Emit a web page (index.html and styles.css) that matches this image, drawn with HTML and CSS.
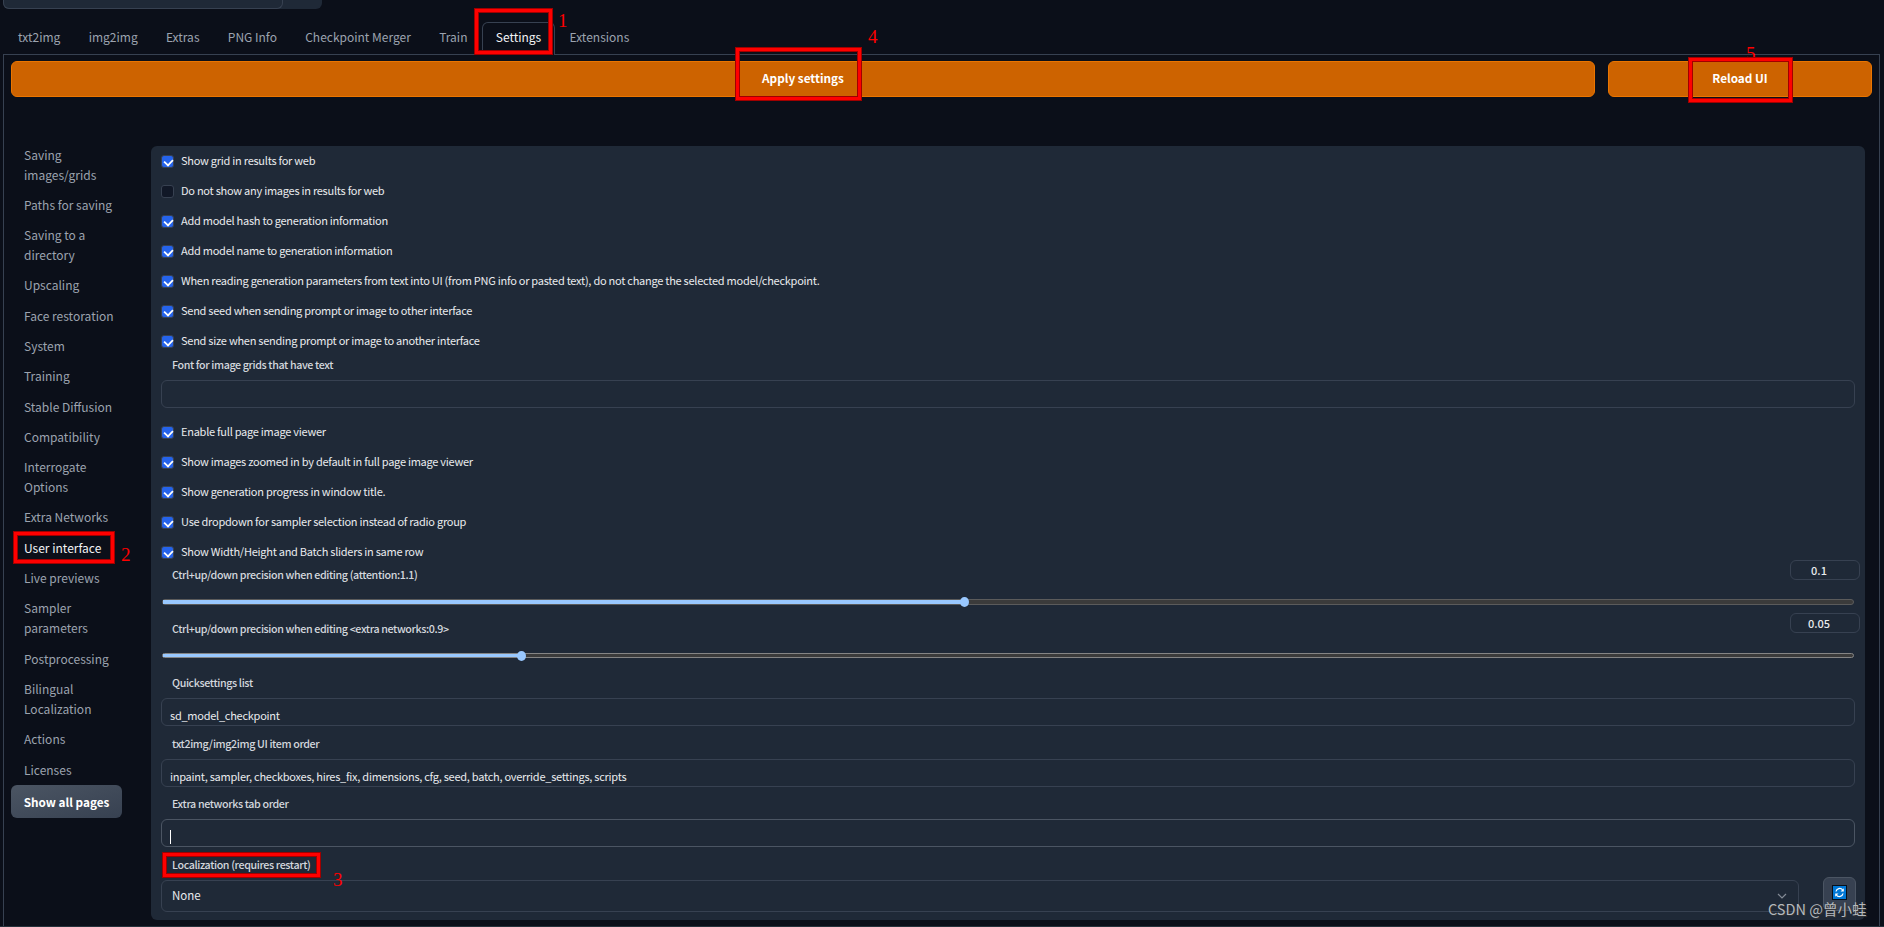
FILE: index.html
```html
<!DOCTYPE html>
<html lang="en">
<head>
    <meta charset="UTF-8">
    <meta name="viewport" content="width=device-width, initial-scale=1.0">
    <title>Stable Diffusion</title>
    <link rel="stylesheet" href="styles.css">
</head>
<body>
    <div class="quicksettings"><div class="quick-select"></div></div>

    <nav class="tabs">
        <span class="tab">txt2img</span>
        <span class="tab">img2img</span>
        <span class="tab">Extras</span>
        <span class="tab">PNG Info</span>
        <span class="tab">Checkpoint Merger</span>
        <span class="tab">Train</span>
        <span class="tab active">Settings</span>
        <span class="tab">Extensions</span>
    </nav>

    <main class="tab-content">
        <div class="actions">
            <button class="primary apply">Apply settings</button>
            <button class="primary reload">Reload UI</button>
        </div>

        <div class="settings">
            <aside class="sidebar">
                <span class="page">Saving images/grids</span>
                <span class="page">Paths for saving</span>
                <span class="page">Saving to a directory</span>
                <span class="page">Upscaling</span>
                <span class="page">Face restoration</span>
                <span class="page">System</span>
                <span class="page">Training</span>
                <span class="page">Stable Diffusion</span>
                <span class="page">Compatibility</span>
                <span class="page">Interrogate Options</span>
                <span class="page">Extra Networks</span>
                <span class="page selected">User interface</span>
                <span class="page">Live previews</span>
                <span class="page">Sampler parameters</span>
                <span class="page">Postprocessing</span>
                <span class="page">Bilingual Localization</span>
                <span class="page">Actions</span>
                <span class="page">Licenses</span>
                <button class="show-all">Show all pages</button>
            </aside>

            <section class="panel">
                <label class="check"><i class="box on"></i>Show grid in results for web</label>
                <label class="check"><i class="box"></i>Do not show any images in results for web</label>
                <label class="check"><i class="box on"></i>Add model hash to generation information</label>
                <label class="check"><i class="box on"></i>Add model name to generation information</label>
                <label class="check"><i class="box on"></i>When reading generation parameters from text into UI (from PNG info or pasted text), do not change the selected model/checkpoint.</label>
                <label class="check"><i class="box on"></i>Send seed when sending prompt or image to other interface</label>
                <label class="check"><i class="box on"></i>Send size when sending prompt or image to another interface</label>

                <div class="field font-field">
                    <div class="label">Font for image grids that have text</div>
                    <div class="input"></div>
                </div>

                <label class="check"><i class="box on"></i>Enable full page image viewer</label>
                <label class="check"><i class="box on"></i>Show images zoomed in by default in full page image viewer</label>
                <label class="check"><i class="box on"></i>Show generation progress in window title.</label>
                <label class="check"><i class="box on"></i>Use dropdown for sampler selection instead of radio group</label>
                <label class="check"><i class="box on"></i>Show Width/Height and Batch sliders in same row</label>

                <div class="slider-field first">
                    <div class="slider-head">
                        <div class="label">Ctrl+up/down precision when editing (attention:1.1)</div>
                        <div class="number">0.1</div>
                    </div>
                    <div class="track"><div class="fill" style="width: 47.4%"></div></div>
                </div>
                <div class="slider-field second">
                    <div class="slider-head">
                        <div class="label">Ctrl+up/down precision when editing &lt;extra networks:0.9&gt;</div>
                        <div class="number">0.05</div>
                    </div>
                    <div class="track thin"><div class="fill" style="width: 21.2%"></div></div>
                </div>

                <div class="field">
                    <div class="label">Quicksettings list</div>
                    <div class="input">sd_model_checkpoint</div>
                </div>
                <div class="field">
                    <div class="label">txt2img/img2img UI item order</div>
                    <div class="input">inpaint, sampler, checkboxes, hires_fix, dimensions, cfg, seed, batch, override_settings, scripts</div>
                </div>
                <div class="field">
                    <div class="label">Extra networks tab order</div>
                    <div class="input focused"><span class="caret"></span></div>
                </div>
                <div class="field">
                    <div class="label">Localization (requires restart)</div>
                    <div class="select-row">
                        <div class="select">
                            None
                            <svg width="10" height="6" viewBox="0 0 10 6"><path d="M1 1l4 4 4-4" fill="none" stroke="#848b96" stroke-width="1.2"/></svg>
                        </div>
                        <button class="refresh">
                            <svg width="15" height="15" viewBox="0 0 15 15">
                                <rect x=".5" y=".5" width="14" height="14" fill="#0078d7" stroke="#06101c"/>
                                <path d="M4 6.5a3.7 3.7 0 0 1 6.6-1.6M11 8.5a3.7 3.7 0 0 1-6.6 1.6" fill="none" stroke="#fff" stroke-width="1.3"/>
                                <path d="M11.8 3.2v3.3H8.5zM3.2 11.8V8.5h3.3z" fill="#fff"/>
                            </svg>
                        </button>
                    </div>
                </div>
            </section>
        </div>
    </main>
    <div class="bottom-edge"></div>

    <!-- step markers -->
    <div class="mark mark1"></div><span class="step step1">1</span>
    <div class="mark mark2"></div><span class="step step2">2</span>
    <div class="mark mark3"></div><span class="step step3">3</span>
    <span class="step step5">5</span><div class="mark mark5"></div>
    <div class="mark mark4"></div><span class="step step4">4</span>
    <div class="watermark">CSDN @曾小蛙</div>
</body>
</html>
```
FILE: styles.css
```css
* {
    box-sizing: border-box;
}
body {
    margin: 0;
    height: 927px;
    overflow: hidden;
    position: relative;
    background: #0b0f19;
    color: #e9ebee;
    font-family: "Noto Sans CJK SC", sans-serif;
    font-size: 12px;
    line-height: 17px;
    display: flex;
    flex-direction: column;
}
button {
    font-family: inherit;
    padding: 0;
}
.quicksettings {
    width: 319px;
    height: 9px;
    margin-left: 3px;
    background: #1f2937;
    border-radius: 0 0 6px 6px;
}
.quick-select {
    width: 280px;
    height: 9px;
    border: 1px solid #374151;
    border-top: 0;
    border-radius: 0 0 6px 6px;
}
.tabs {
    display: flex;
    height: 46px;
    padding: 13px 0 0 4px;
}
.tab {
    height: 33px;
    padding: 0 13px;
    border: 1px solid transparent;
    border-bottom: 0;
    border-radius: 6px 6px 0 0;
    color: #9ca3af;
    font-size: 12px;
    line-height: 28px;
    white-space: nowrap;
}
.tab + .tab {
    margin-left: 0.3px;
}
.tab.active {
    position: relative;
    background: #0b0f19;
    border-color: #374151;
    color: #f3f4f6;
}
.tab-content {
    margin: -1px 4px 0 3px;
    height: 872px;
    border: 1px solid #374151;
    border-bottom: 0;
    padding: 6px 7px 0 7px;
}
.actions {
    display: flex;
    gap: 13px;
    height: 36px;
}
.primary {
    padding-bottom: 3px;
    border: 1px solid #ea7500;
    border-radius: 6px;
    background: #cd6300;
    color: #fff;
    font-size: 11.75px;
    font-weight: 700;
}
.apply {
    flex: 1;
}
.reload {
    width: 264px;
}
.settings {
    display: flex;
    margin-top: 49px;
    padding-right: 7px;
}
.sidebar {
    width: 140px;
    display: flex;
    flex-direction: column;
    align-items: flex-start;
}
.page {
    width: 110px;
    padding-left: 13px;
    margin-bottom: 10.3px;
    color: #9ca3af;
    font-size: 12px;
    line-height: 20px;
}
.page:first-child {
    margin-top: -1.5px;
}
.page.selected {
    color: #f3f4f6;
}
.show-all {
    width: 111px;
    height: 33px;
    margin-top: -4.5px;
    border: 0;
    border-radius: 6px;
    background: linear-gradient(to bottom right, #4b5563, #374151);
    color: #fff;
    font-size: 11.75px;
    font-weight: 700;
}
.panel {
    flex: 1;
    height: 774px;
    padding: 0 10px;
    background: #1f2937;
    border-radius: 6px;
}
.check {
    display: flex;
    align-items: center;
    gap: 7px;
    height: 30px;
    padding-bottom: 2px;
    font-size: 11px;
    letter-spacing: -0.26px;
}
.box {
    width: 13px;
    height: 13px;
    margin-top: 3px;
    border: 1px solid #374151;
    border-radius: 3px;
    background: #111827;
}
.box.on {
    background: #2563eb;
    position: relative;
}
.box.on::after {
    content: "";
    position: absolute;
    left: 2px;
    top: 2px;
    width: 7px;
    height: 5px;
    border-left: 2px solid #fff;
    border-bottom: 2px solid #fff;
    transform: rotate(-47deg) scale(0.9);
}
.field {
    height: 60.4px;
}
.font-field {
    height: 61px;
}
.label {
    height: 17px;
    padding-left: 11px;
    font-size: 10.7px;
    font-weight: 500;
    letter-spacing: -0.38px;
    color: #d3d7dd;
}
.input {
    height: 28px;
    margin-top: 7px;
    padding: 8px 8px 0;
    border: 1px solid #374151;
    border-radius: 6px;
    font-size: 11px;
    letter-spacing: -0.26px;
}
.input.focused {
    border-color: #4b5563;
}
.caret {
    display: block;
    width: 1px;
    height: 14px;
    margin-top: 2px;
    background: #fff;
}
.slider-field {
    height: 54px;
}
.slider-field.first {
    margin-top: -0.6px;
}
.slider-head {
    display: flex;
    justify-content: space-between;
    height: 17px;
    margin-right: -5px;
}
.number {
    width: 70px;
    height: 20px;
    margin-top: -6px;
    padding-right: 12px;
    border: 1px solid #374151;
    border-radius: 6px;
    text-align: center;
    font-size: 11px;
    font-weight: 500;
    line-height: 18px;
}
.second .number {
    margin-top: -7px;
}
.track {
    height: 6px;
    margin: 16px 1px 0;
    border: 1px solid #5b5b5b;
    border-radius: 3px;
    background: #3b3b3b;
}
.track.thin {
    height: 5px;
    border-color: #858585;
}
.fill {
    position: relative;
    height: 100%;
    background: #99c8ff;
}
.fill::after {
    content: "";
    position: absolute;
    right: -5px;
    top: -3px;
    width: 9px;
    height: 10px;
    border-radius: 50%;
    background: #99c8ff;
}
.select-row {
    display: flex;
    align-items: flex-start;
    justify-content: space-between;
    margin-top: 7px;
}
.select {
    display: flex;
    align-items: center;
    justify-content: space-between;
    width: 1638px;
    height: 32px;
    padding: 0 11px 0 10px;
    border: 1px solid #374151;
    border-radius: 6px;
    font-size: 11.5px;
}
.refresh {
    width: 33px;
    height: 34px;
    margin-top: -3px;
    margin-right: -1px;
    padding-top: 2px;
    border: 1px solid #4b5563;
    border-radius: 6px;
    background: #374151;
}
.bottom-edge {
    height: 1px;
    background: #26323c;
}
.mark {
    position: absolute;
    border: 3px solid #f00;
    box-shadow: 0 0 0 1px #a00000, inset 0 0 0 1px #a00000;
}
.mark1 { left: 475px; top: 9px; width: 77px; height: 45px; }
.mark2 { left: 14px; top: 532px; width: 100px; height: 31px; }
.mark3 { left: 163px; top: 853px; width: 157px; height: 24px; }
.mark4 { left: 736px; top: 48px; width: 125px; height: 52px; }
.mark5 { left: 1689px; top: 58px; width: 103px; height: 44px; }
.step {
    position: absolute;
    color: #f00;
    font-family: "Liberation Serif", serif;
    font-size: 19px;
    line-height: 20px;
}
.step1 { left: 558px; top: 11px; }
.step2 { left: 121px; top: 545px; }
.step3 { left: 333px; top: 870px; }
.step4 { left: 868px; top: 27px; }
.step5 { left: 1746px; top: 44px; }
.watermark {
    position: absolute;
    left: 1768px;
    top: 899px;
    color: #b4b8bd;
    font-size: 14.5px;
    line-height: 20px;
    text-shadow: 1px 1px 1px #333;
    white-space: nowrap;
}
```
